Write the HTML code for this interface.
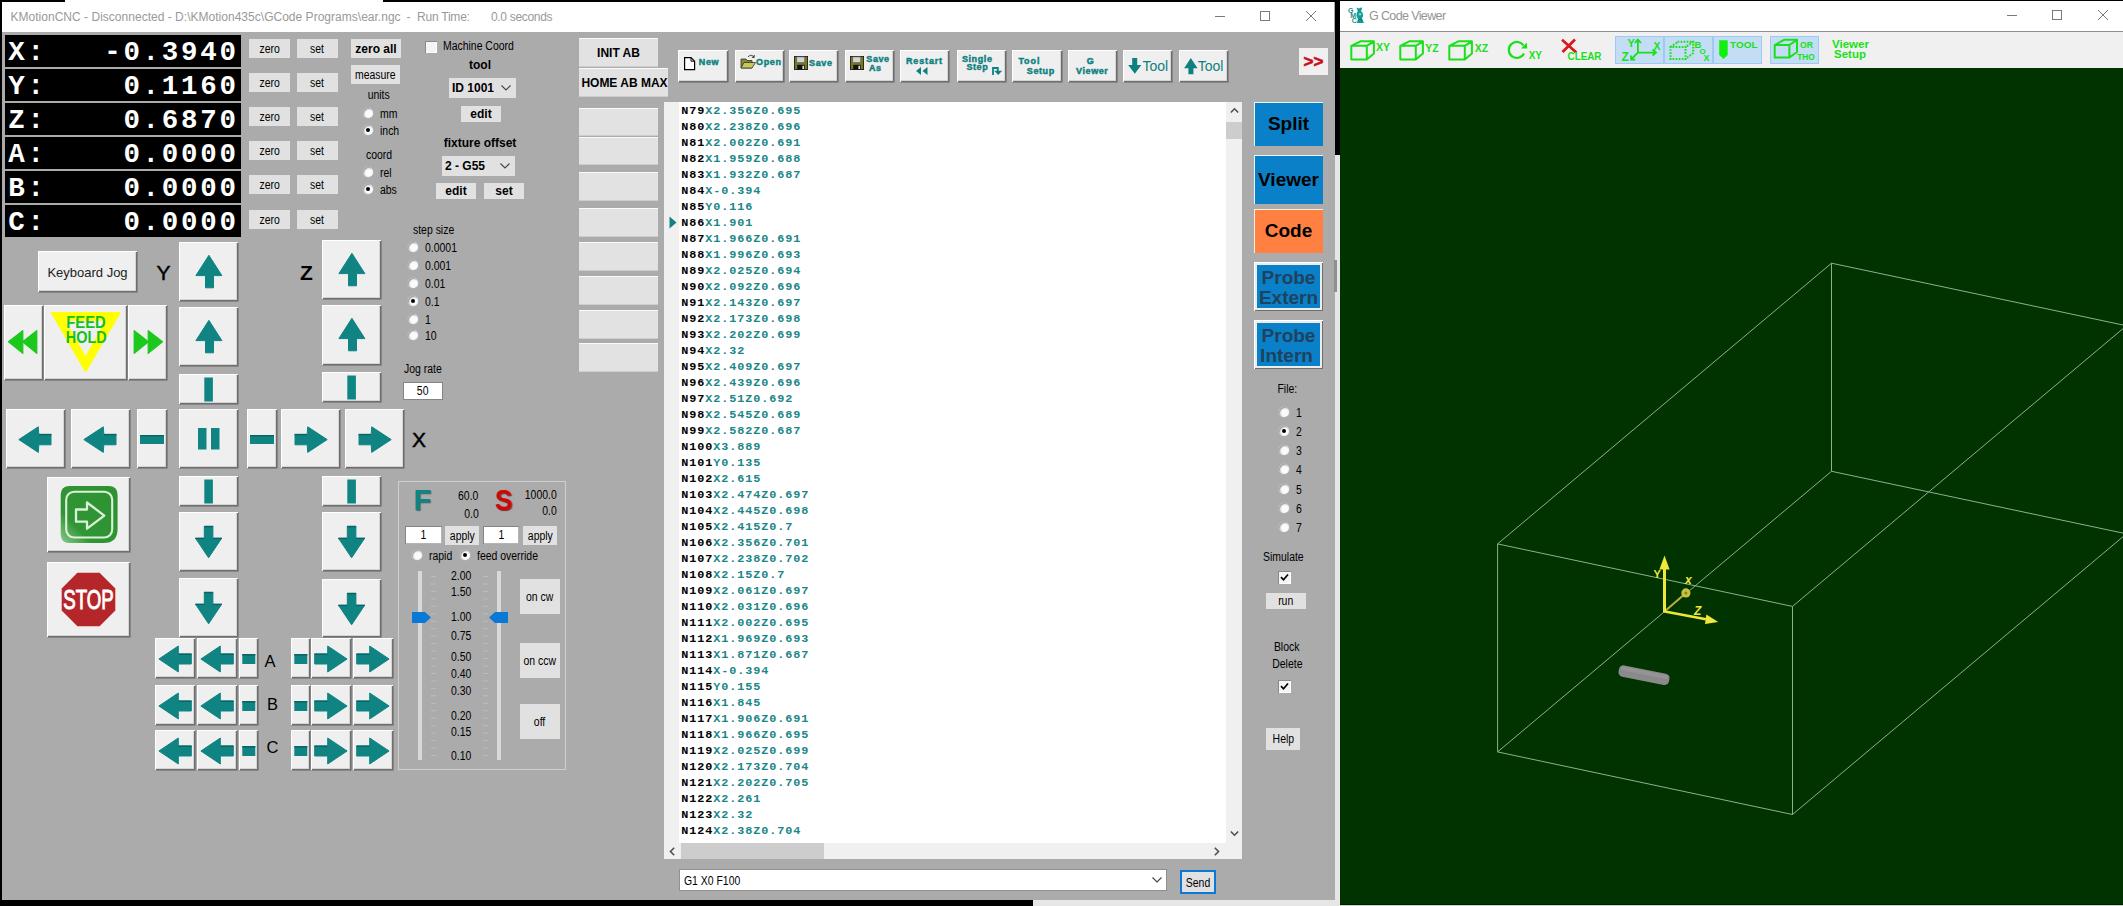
<!DOCTYPE html><html><head><meta charset="utf-8"><title>KMotionCNC</title><style>
html,body{margin:0;padding:0}
body{width:2123px;height:906px;overflow:hidden;position:relative;background:#ababab;font-family:"Liberation Sans",sans-serif;font-size:12px;color:#000}
.a{position:absolute;box-sizing:border-box}
.t{white-space:nowrap;line-height:14px}
.c{text-align:center}
.n{display:inline-block;transform:scaleX(.87);transform-origin:0 50%}
.c .n,.fb .n{transform-origin:50% 50%}
.r .n{transform-origin:100% 50%}
.fb{background:#e1e1e1;text-align:center;white-space:nowrap}
.jb{background:#efefef;box-shadow:inset 1px 1px 0 #fff,inset -1px -1px 0 #6e6e6e,inset -2px -2px 0 #d4d4d4,0.6px 0.6px 0 0 #6e6e6e}
.jb svg{position:absolute;left:0;top:0}
.b{font-weight:bold}
.dro{background:#000;color:#fff;font-family:"Liberation Mono",monospace;font-weight:bold;font-size:27.5px;letter-spacing:2.7px;line-height:36.6px;white-space:pre}
.rad{border-radius:50%;background:#fbfbfb;box-shadow:inset 1px 1px 1.5px rgba(0,0,0,.42),0 0 1px #fff}
.rad.on::after{content:"";position:absolute;left:3.1px;top:3.1px;width:4px;height:4px;border-radius:50%;background:#000}
.chk{width:13px;height:13px;background:#f4f4f4;box-shadow:inset 1px 1px 0 #8a8a8a,inset -1px -1px 0 #fff}
.code{font-family:"Liberation Mono",monospace;font-size:11.8px;letter-spacing:0.92px;font-weight:bold;line-height:16px;white-space:pre;color:#1b8686}
.code b{color:#000}
.tb{color:#0e8080;font-weight:bold;font-size:9px;line-height:10px;letter-spacing:0.6px;-webkit-text-stroke:0.45px #0e8080}
.big{font-weight:bold;font-size:19px;text-align:center;white-space:nowrap}
.vt{fill:#19e019;font-family:"Liberation Sans",sans-serif;font-weight:bold}
</style></head><body>
<div class="a " style="left:0px;top:0px;width:2123px;height:2px;background:#000"></div>
<div class="a " style="left:65px;top:0px;width:318px;height:2px;background:#fff"></div>
<div class="a " style="left:1340px;top:1px;width:783px;height:1px;background:#fff"></div>
<div class="a " style="left:0px;top:0px;width:2px;height:906px;background:#000"></div>
<div class="a " style="left:2px;top:2px;width:1332px;height:30px;background:#fff"></div>
<div class="a " style="left:1334.6px;top:0px;width:5.4px;height:155.4px;background:#000"></div>
<div class="a " style="left:1334.8px;top:155.4px;width:5.2px;height:750.6px;background:#e6e6e6"></div>
<div class="a " style="left:1334px;top:260px;width:3px;height:32px;background:#8f8f8f"></div>
<div class="a " style="left:0px;top:900px;width:1033px;height:6px;background:#000"></div>
<div class="a " style="left:1033px;top:900px;width:307px;height:6px;background:#e6e6e6"></div>
<div class="a t " style="left:10.5px;top:10px;color:#999;font-size:12px;line-height:14px;letter-spacing:0.02px;">KMotionCNC - Disconnected - D:\KMotion435c\GCode Programs\ear.ngc</div>
<div class="a t " style="left:406.5px;top:10px;color:#999;font-size:12px;line-height:14px;">-</div>
<div class="a t " style="left:417px;top:10px;color:#999;font-size:12px;line-height:14px;letter-spacing:-0.22px">Run Time:</div>
<div class="a t " style="left:491px;top:10px;color:#999;font-size:12px;line-height:14px;letter-spacing:-0.32px">0.0 seconds</div>
<div class="a " style="left:1215px;top:16px;width:10px;height:1px;background:#7a7a7a"></div>
<div class="a " style="left:1260px;top:11px;width:10px;height:10px;border:1px solid #7a7a7a"></div>
<svg class="a" style="left:1305px;top:10px" width="12" height="12" viewBox="0 0 12 12"><path d="M1 1L11 11M11 1L1 11" stroke="#7a7a7a" stroke-width="1" fill="none"/></svg>
<div class="a dro" style="left:5px;top:35px;width:236px;height:32px;padding-left:3.2px;overflow:hidden">X:   -0.3940</div>
<div class="a fb t" style="left:249px;top:39px;width:41px;height:19px;line-height:20px"><span class="n">zero</span></div>
<div class="a fb t" style="left:297px;top:39px;width:41px;height:19px;line-height:20px"><span class="n">set</span></div>
<div class="a dro" style="left:5px;top:69px;width:236px;height:32px;padding-left:3.2px;overflow:hidden">Y:    0.1160</div>
<div class="a fb t" style="left:249px;top:73px;width:41px;height:19px;line-height:20px"><span class="n">zero</span></div>
<div class="a fb t" style="left:297px;top:73px;width:41px;height:19px;line-height:20px"><span class="n">set</span></div>
<div class="a dro" style="left:5px;top:103px;width:236px;height:32px;padding-left:3.2px;overflow:hidden">Z:    0.6870</div>
<div class="a fb t" style="left:249px;top:107px;width:41px;height:19px;line-height:20px"><span class="n">zero</span></div>
<div class="a fb t" style="left:297px;top:107px;width:41px;height:19px;line-height:20px"><span class="n">set</span></div>
<div class="a dro" style="left:5px;top:137px;width:236px;height:32px;padding-left:3.2px;overflow:hidden">A:    0.0000</div>
<div class="a fb t" style="left:249px;top:141px;width:41px;height:19px;line-height:20px"><span class="n">zero</span></div>
<div class="a fb t" style="left:297px;top:141px;width:41px;height:19px;line-height:20px"><span class="n">set</span></div>
<div class="a dro" style="left:5px;top:171px;width:236px;height:32px;padding-left:3.2px;overflow:hidden">B:    0.0000</div>
<div class="a fb t" style="left:249px;top:175px;width:41px;height:19px;line-height:20px"><span class="n">zero</span></div>
<div class="a fb t" style="left:297px;top:175px;width:41px;height:19px;line-height:20px"><span class="n">set</span></div>
<div class="a dro" style="left:5px;top:205px;width:236px;height:32px;padding-left:3.2px;overflow:hidden">C:    0.0000</div>
<div class="a fb t" style="left:249px;top:210px;width:41px;height:19px;line-height:20px"><span class="n">zero</span></div>
<div class="a fb t" style="left:297px;top:210px;width:41px;height:19px;line-height:20px"><span class="n">set</span></div>
<div class="a fb t b" style="left:351px;top:39px;width:50px;height:19px;line-height:21px">zero all</div>
<div class="a fb t" style="left:351px;top:65px;width:49px;height:19px;line-height:20px"><span class="n">measure</span></div>
<div class="a t c" style="left:351px;top:88px;width:55px;height:14px;"><span class="n">units</span></div>
<div class="a rad" style="left:362.9px;top:107.7px;width:10.2px;height:10.2px;"></div>
<div class="a t " style="left:379.5px;top:106.5px;"><span class="n">mm</span></div>
<div class="a rad on" style="left:362.9px;top:124.7px;width:10.2px;height:10.2px;"></div>
<div class="a t " style="left:379.5px;top:123.5px;"><span class="n">inch</span></div>
<div class="a t c" style="left:351px;top:148px;width:57px;height:14px;"><span class="n">coord</span></div>
<div class="a rad" style="left:362.9px;top:166.7px;width:10.2px;height:10.2px;"></div>
<div class="a t " style="left:379.5px;top:165.5px;"><span class="n">rel</span></div>
<div class="a rad on" style="left:362.9px;top:183.7px;width:10.2px;height:10.2px;"></div>
<div class="a t " style="left:379.5px;top:182.5px;"><span class="n">abs</span></div>
<div class="a chk" style="left:424.7px;top:40.5px;width:12.3px;height:12.3px;"></div>
<div class="a t " style="left:442.5px;top:39px;"><span class="n">Machine Coord</span></div>
<div class="a t c b" style="left:440px;top:58px;width:80px;height:14px;">tool</div>
<div class="a t b" style="left:449px;top:78px;width:67px;height:20px;background:#e1e1e1;line-height:21.5px;padding-left:3px">ID 1001<svg class="a" style="right:5px;top:7.0px" width="10" height="6" viewBox="0 0 10 6"><path d="M0.5 0.5L5 5L9.5 0.5" stroke="#444" stroke-width="1.1" fill="none"/></svg></div>
<div class="a fb t b" style="left:461px;top:106px;width:40px;height:16px;line-height:17px">edit</div>
<div class="a t c b" style="left:430px;top:136px;width:100px;height:14px;">fixture offset</div>
<div class="a t b" style="left:442px;top:156px;width:73px;height:20px;background:#e1e1e1;line-height:21.5px;padding-left:3px">2 - G55<svg class="a" style="right:5px;top:7.0px" width="10" height="6" viewBox="0 0 10 6"><path d="M0.5 0.5L5 5L9.5 0.5" stroke="#444" stroke-width="1.1" fill="none"/></svg></div>
<div class="a fb t b" style="left:436px;top:183px;width:40px;height:16px;line-height:17px">edit</div>
<div class="a fb t b" style="left:484px;top:183px;width:40px;height:16px;line-height:17px">set</div>
<div class="a fb t b" style="left:579px;top:38px;width:79px;height:29px;line-height:30px;background:#e2e2e2;box-shadow:inset 0 1px 0 #fafafa,inset 0 -1px 0 #cdcdcd">INIT AB</div>
<div class="a fb t b" style="left:579px;top:68px;width:89px;height:29px;line-height:30px;padding-left:2px;background:#e2e2e2;box-shadow:inset 0 1px 0 #fafafa,inset 0 -1px 0 #cdcdcd">HOME AB MAX</div>
<div class="a " style="left:579px;top:108px;width:79px;height:28px;background:#e2e2e2;box-shadow:inset 0 1px 0 #fafafa,inset 0 -1px 0 #cdcdcd"></div>
<div class="a " style="left:579px;top:137px;width:79px;height:28px;background:#e2e2e2;box-shadow:inset 0 1px 0 #fafafa,inset 0 -1px 0 #cdcdcd"></div>
<div class="a " style="left:579px;top:172px;width:79px;height:29px;background:#e2e2e2;box-shadow:inset 0 1px 0 #fafafa,inset 0 -1px 0 #cdcdcd"></div>
<div class="a " style="left:579px;top:208px;width:79px;height:29px;background:#e2e2e2;box-shadow:inset 0 1px 0 #fafafa,inset 0 -1px 0 #cdcdcd"></div>
<div class="a " style="left:579px;top:242px;width:79px;height:29px;background:#e2e2e2;box-shadow:inset 0 1px 0 #fafafa,inset 0 -1px 0 #cdcdcd"></div>
<div class="a " style="left:579px;top:276px;width:79px;height:29px;background:#e2e2e2;box-shadow:inset 0 1px 0 #fafafa,inset 0 -1px 0 #cdcdcd"></div>
<div class="a " style="left:579px;top:310px;width:79px;height:29px;background:#e2e2e2;box-shadow:inset 0 1px 0 #fafafa,inset 0 -1px 0 #cdcdcd"></div>
<div class="a " style="left:579px;top:343px;width:79px;height:29px;background:#e2e2e2;box-shadow:inset 0 1px 0 #fafafa,inset 0 -1px 0 #cdcdcd"></div>
<div class="a t " style="left:412.5px;top:223px;"><span class="n">step size</span></div>
<div class="a rad" style="left:407.9px;top:241.7px;width:10.2px;height:10.2px;"></div>
<div class="a t " style="left:424.5px;top:240.5px;"><span class="n">0.0001</span></div>
<div class="a rad" style="left:407.9px;top:259.7px;width:10.2px;height:10.2px;"></div>
<div class="a t " style="left:424.5px;top:258.5px;"><span class="n">0.001</span></div>
<div class="a rad" style="left:407.9px;top:277.7px;width:10.2px;height:10.2px;"></div>
<div class="a t " style="left:424.5px;top:276.5px;"><span class="n">0.01</span></div>
<div class="a rad on" style="left:407.9px;top:295.7px;width:10.2px;height:10.2px;"></div>
<div class="a t " style="left:424.5px;top:294.5px;"><span class="n">0.1</span></div>
<div class="a rad" style="left:407.9px;top:313.7px;width:10.2px;height:10.2px;"></div>
<div class="a t " style="left:424.5px;top:312.5px;"><span class="n">1</span></div>
<div class="a rad" style="left:407.9px;top:330.2px;width:10.2px;height:10.2px;"></div>
<div class="a t " style="left:424.5px;top:329px;"><span class="n">10</span></div>
<div class="a t " style="left:404px;top:362px;"><span class="n">Jog rate</span></div>
<div class="a t c" style="left:403px;top:382px;width:40px;height:18px;background:#fff;line-height:19px;box-shadow:inset 0 0 0 1px #858585"><span class="n">50</span></div>
<div class="a jb" style="left:179px;top:242px;width:59px;height:59px;"><svg width="59" height="59" viewBox="0 0 59 59"><polygon points="29.9,13.3 42.9,33.6 34.5,33.6 34.5,45.8 26.5,45.8 26.5,33.6 16.9,33.6" fill="#108383" stroke="#108383" stroke-width="1" stroke-linejoin="round"/></svg></div>
<div class="a jb" style="left:179px;top:307px;width:59px;height:59px;"><svg width="59" height="59" viewBox="0 0 59 59"><polygon points="29.9,13.3 42.9,33.6 34.5,33.6 34.5,45.8 26.5,45.8 26.5,33.6 16.9,33.6" fill="#108383" stroke="#108383" stroke-width="1" stroke-linejoin="round"/></svg></div>
<div class="a jb" style="left:322px;top:240px;width:59px;height:59px;"><svg width="59" height="59" viewBox="0 0 59 59"><polygon points="29.9,13.3 42.9,33.6 34.5,33.6 34.5,45.8 26.5,45.8 26.5,33.6 16.9,33.6" fill="#108383" stroke="#108383" stroke-width="1" stroke-linejoin="round"/></svg></div>
<div class="a jb" style="left:322px;top:305px;width:59px;height:60px;"><svg width="59" height="60" viewBox="0 0 59 60"><polygon points="29.9,13.3 42.9,33.6 34.5,33.6 34.5,45.8 26.5,45.8 26.5,33.6 16.9,33.6" fill="#108383" stroke="#108383" stroke-width="1" stroke-linejoin="round"/></svg></div>
<div class="a jb" style="left:179px;top:374px;width:59px;height:30px;"><svg width="59" height="30" viewBox="0 0 59 30"><rect x="25.3" y="3.5" width="8.6" height="24" fill="#108383"/></svg></div>
<div class="a jb" style="left:322px;top:372px;width:59px;height:30px;"><svg width="59" height="30" viewBox="0 0 59 30"><rect x="25.3" y="3.5" width="8.6" height="24" fill="#108383"/></svg></div>
<div class="a jb" style="left:179px;top:476px;width:59px;height:30px;"><svg width="59" height="30" viewBox="0 0 59 30"><rect x="25.3" y="3.5" width="8.6" height="24" fill="#108383"/></svg></div>
<div class="a jb" style="left:322px;top:476px;width:59px;height:30px;"><svg width="59" height="30" viewBox="0 0 59 30"><rect x="25.3" y="3.5" width="8.6" height="24" fill="#108383"/></svg></div>
<div class="a jb" style="left:179px;top:512px;width:59px;height:59px;"><svg width="59" height="59" viewBox="0 0 59 59"><polygon points="29.6,45.8 42.7,26.2 33.9,26.2 33.9,14.3 25.3,14.3 25.3,26.2 16.5,26.2" fill="#108383" stroke="#108383" stroke-width="1" stroke-linejoin="round"/><rect x="25.1" y="13.9" width="9" height="1.4" fill="#0b6464"/><rect x="16.3" y="25.8" width="9" height="1.3" fill="#0b6464"/><rect x="33.9" y="25.8" width="9" height="1.3" fill="#0b6464"/></svg></div>
<div class="a jb" style="left:322px;top:512px;width:59px;height:59px;"><svg width="59" height="59" viewBox="0 0 59 59"><polygon points="29.6,45.8 42.7,26.2 33.9,26.2 33.9,14.3 25.3,14.3 25.3,26.2 16.5,26.2" fill="#108383" stroke="#108383" stroke-width="1" stroke-linejoin="round"/><rect x="25.1" y="13.9" width="9" height="1.4" fill="#0b6464"/><rect x="16.3" y="25.8" width="9" height="1.3" fill="#0b6464"/><rect x="33.9" y="25.8" width="9" height="1.3" fill="#0b6464"/></svg></div>
<div class="a jb" style="left:179px;top:578px;width:59px;height:59px;"><svg width="59" height="59" viewBox="0 0 59 59"><polygon points="29.6,45.8 42.7,26.2 33.9,26.2 33.9,14.3 25.3,14.3 25.3,26.2 16.5,26.2" fill="#108383" stroke="#108383" stroke-width="1" stroke-linejoin="round"/><rect x="25.1" y="13.9" width="9" height="1.4" fill="#0b6464"/><rect x="16.3" y="25.8" width="9" height="1.3" fill="#0b6464"/><rect x="33.9" y="25.8" width="9" height="1.3" fill="#0b6464"/></svg></div>
<div class="a jb" style="left:322px;top:579px;width:59px;height:58px;"><svg width="59" height="58" viewBox="0 0 59 58"><polygon points="29.6,45.8 42.7,26.2 33.9,26.2 33.9,14.3 25.3,14.3 25.3,26.2 16.5,26.2" fill="#108383" stroke="#108383" stroke-width="1" stroke-linejoin="round"/><rect x="25.1" y="13.9" width="9" height="1.4" fill="#0b6464"/><rect x="16.3" y="25.8" width="9" height="1.3" fill="#0b6464"/><rect x="33.9" y="25.8" width="9" height="1.3" fill="#0b6464"/></svg></div>
<div class="a jb" style="left:6px;top:409px;width:59px;height:59px;"><svg width="59" height="59" viewBox="0 0 59 59"><polygon points="12.8,30.6 32.3,17.8 32.8,25.4 45.0,25.4 45.0,35.8 32.8,35.8 32.3,43.4" fill="#108383" stroke="#108383" stroke-width="1" stroke-linejoin="round"/><rect x="33" y="24.9" width="12.5" height="1.4" fill="#0b6464"/></svg></div>
<div class="a jb" style="left:71px;top:409px;width:59px;height:59px;"><svg width="59" height="59" viewBox="0 0 59 59"><polygon points="12.8,30.6 32.3,17.8 32.8,25.4 45.0,25.4 45.0,35.8 32.8,35.8 32.3,43.4" fill="#108383" stroke="#108383" stroke-width="1" stroke-linejoin="round"/><rect x="33" y="24.9" width="12.5" height="1.4" fill="#0b6464"/></svg></div>
<div class="a jb" style="left:137px;top:409px;width:30px;height:59px;"><svg width="30" height="59" viewBox="0 0 30 59"><rect x="3" y="26" width="24" height="9" fill="#108383"/><rect x="3" y="26" width="24" height="1.4" fill="#0b6464"/></svg></div>
<div class="a jb" style="left:179px;top:409px;width:59px;height:59px;"><svg width="59" height="59" viewBox="0 0 59 59"><rect x="19" y="19" width="8.5" height="21.5" fill="#108383"/><rect x="32" y="19" width="8.5" height="21.5" fill="#108383"/></svg></div>
<div class="a jb" style="left:247px;top:409px;width:30px;height:59px;"><svg width="30" height="59" viewBox="0 0 30 59"><rect x="3" y="26" width="24" height="9" fill="#108383"/><rect x="3" y="26" width="24" height="1.4" fill="#0b6464"/></svg></div>
<div class="a jb" style="left:281px;top:409px;width:59px;height:59px;"><svg width="59" height="59" viewBox="0 0 59 59"><polygon points="46.2,30.6 26.7,17.8 26.2,25.4 14.0,25.4 14.0,35.8 26.2,35.8 26.7,43.4" fill="#108383" stroke="#108383" stroke-width="1" stroke-linejoin="round"/><rect x="13.5" y="24.9" width="12.5" height="1.4" fill="#0b6464"/></svg></div>
<div class="a jb" style="left:345px;top:409px;width:59px;height:59px;"><svg width="59" height="59" viewBox="0 0 59 59"><polygon points="46.2,30.6 26.7,17.8 26.2,25.4 14.0,25.4 14.0,35.8 26.2,35.8 26.7,43.4" fill="#108383" stroke="#108383" stroke-width="1" stroke-linejoin="round"/><rect x="13.5" y="24.9" width="12.5" height="1.4" fill="#0b6464"/></svg></div>
<div class="a t " style="left:412px;top:428px;font-size:21px;line-height:24px;-webkit-text-stroke:0.45px #000">X</div>
<div class="a t " style="left:156.6px;top:261.3px;font-size:21px;line-height:24px;-webkit-text-stroke:0.45px #000">Y</div>
<div class="a t b" style="left:300px;top:261px;font-size:21px;line-height:24px">Z</div>
<div class="a jb" style="left:155px;top:638px;width:40px;height:40px;"><svg width="40" height="40" viewBox="0 0 40 40"><polygon points="3.9,21.0 23.3,8.0 23.3,16.0 36.3,16.0 36.3,26.0 23.3,26.0 23.3,34.0" fill="#108383" stroke="#108383" stroke-width="1" stroke-linejoin="round"/><rect x="23.5" y="15.5" width="13.2" height="1.4" fill="#0b6464"/></svg></div>
<div class="a jb" style="left:197px;top:638px;width:40px;height:40px;"><svg width="40" height="40" viewBox="0 0 40 40"><polygon points="3.9,21.0 23.3,8.0 23.3,16.0 36.3,16.0 36.3,26.0 23.3,26.0 23.3,34.0" fill="#108383" stroke="#108383" stroke-width="1" stroke-linejoin="round"/><rect x="23.5" y="15.5" width="13.2" height="1.4" fill="#0b6464"/></svg></div>
<div class="a jb" style="left:239px;top:638px;width:19px;height:40px;"><svg width="19" height="40" viewBox="0 0 19 40"><rect x="3.3" y="16" width="13" height="10" fill="#108383"/><rect x="3.3" y="16" width="13" height="1.6" fill="#0b6464"/></svg></div>
<div class="a jb" style="left:291px;top:638px;width:19px;height:40px;"><svg width="19" height="40" viewBox="0 0 19 40"><rect x="3.3" y="16" width="13" height="10" fill="#108383"/><rect x="3.3" y="16" width="13" height="1.6" fill="#0b6464"/></svg></div>
<div class="a jb" style="left:311px;top:638px;width:40px;height:40px;"><svg width="40" height="40" viewBox="0 0 40 40"><polygon points="36.1,21.0 16.7,8.0 16.7,16.0 3.7,16.0 3.7,26.0 16.7,26.0 16.7,34.0" fill="#108383" stroke="#108383" stroke-width="1" stroke-linejoin="round"/><rect x="3.3" y="15.5" width="13.2" height="1.4" fill="#0b6464"/></svg></div>
<div class="a jb" style="left:353px;top:638px;width:40px;height:40px;"><svg width="40" height="40" viewBox="0 0 40 40"><polygon points="36.1,21.0 16.7,8.0 16.7,16.0 3.7,16.0 3.7,26.0 16.7,26.0 16.7,34.0" fill="#108383" stroke="#108383" stroke-width="1" stroke-linejoin="round"/><rect x="3.3" y="15.5" width="13.2" height="1.4" fill="#0b6464"/></svg></div>
<div class="a t " style="left:264.6px;top:651px;font-size:16.5px;line-height:20px">A</div>
<div class="a jb" style="left:155px;top:685px;width:40px;height:40px;"><svg width="40" height="40" viewBox="0 0 40 40"><polygon points="3.9,21.0 23.3,8.0 23.3,16.0 36.3,16.0 36.3,26.0 23.3,26.0 23.3,34.0" fill="#108383" stroke="#108383" stroke-width="1" stroke-linejoin="round"/><rect x="23.5" y="15.5" width="13.2" height="1.4" fill="#0b6464"/></svg></div>
<div class="a jb" style="left:197px;top:685px;width:40px;height:40px;"><svg width="40" height="40" viewBox="0 0 40 40"><polygon points="3.9,21.0 23.3,8.0 23.3,16.0 36.3,16.0 36.3,26.0 23.3,26.0 23.3,34.0" fill="#108383" stroke="#108383" stroke-width="1" stroke-linejoin="round"/><rect x="23.5" y="15.5" width="13.2" height="1.4" fill="#0b6464"/></svg></div>
<div class="a jb" style="left:239px;top:685px;width:19px;height:40px;"><svg width="19" height="40" viewBox="0 0 19 40"><rect x="3.3" y="16" width="13" height="10" fill="#108383"/><rect x="3.3" y="16" width="13" height="1.6" fill="#0b6464"/></svg></div>
<div class="a jb" style="left:291px;top:685px;width:19px;height:40px;"><svg width="19" height="40" viewBox="0 0 19 40"><rect x="3.3" y="16" width="13" height="10" fill="#108383"/><rect x="3.3" y="16" width="13" height="1.6" fill="#0b6464"/></svg></div>
<div class="a jb" style="left:311px;top:685px;width:40px;height:40px;"><svg width="40" height="40" viewBox="0 0 40 40"><polygon points="36.1,21.0 16.7,8.0 16.7,16.0 3.7,16.0 3.7,26.0 16.7,26.0 16.7,34.0" fill="#108383" stroke="#108383" stroke-width="1" stroke-linejoin="round"/><rect x="3.3" y="15.5" width="13.2" height="1.4" fill="#0b6464"/></svg></div>
<div class="a jb" style="left:353px;top:685px;width:40px;height:40px;"><svg width="40" height="40" viewBox="0 0 40 40"><polygon points="36.1,21.0 16.7,8.0 16.7,16.0 3.7,16.0 3.7,26.0 16.7,26.0 16.7,34.0" fill="#108383" stroke="#108383" stroke-width="1" stroke-linejoin="round"/><rect x="3.3" y="15.5" width="13.2" height="1.4" fill="#0b6464"/></svg></div>
<div class="a t " style="left:266.9px;top:694px;font-size:16.5px;line-height:20px">B</div>
<div class="a jb" style="left:155px;top:730px;width:40px;height:40px;"><svg width="40" height="40" viewBox="0 0 40 40"><polygon points="3.9,21.0 23.3,8.0 23.3,16.0 36.3,16.0 36.3,26.0 23.3,26.0 23.3,34.0" fill="#108383" stroke="#108383" stroke-width="1" stroke-linejoin="round"/><rect x="23.5" y="15.5" width="13.2" height="1.4" fill="#0b6464"/></svg></div>
<div class="a jb" style="left:197px;top:730px;width:40px;height:40px;"><svg width="40" height="40" viewBox="0 0 40 40"><polygon points="3.9,21.0 23.3,8.0 23.3,16.0 36.3,16.0 36.3,26.0 23.3,26.0 23.3,34.0" fill="#108383" stroke="#108383" stroke-width="1" stroke-linejoin="round"/><rect x="23.5" y="15.5" width="13.2" height="1.4" fill="#0b6464"/></svg></div>
<div class="a jb" style="left:239px;top:730px;width:19px;height:40px;"><svg width="19" height="40" viewBox="0 0 19 40"><rect x="3.3" y="16" width="13" height="10" fill="#108383"/><rect x="3.3" y="16" width="13" height="1.6" fill="#0b6464"/></svg></div>
<div class="a jb" style="left:291px;top:730px;width:19px;height:40px;"><svg width="19" height="40" viewBox="0 0 19 40"><rect x="3.3" y="16" width="13" height="10" fill="#108383"/><rect x="3.3" y="16" width="13" height="1.6" fill="#0b6464"/></svg></div>
<div class="a jb" style="left:311px;top:730px;width:40px;height:40px;"><svg width="40" height="40" viewBox="0 0 40 40"><polygon points="36.1,21.0 16.7,8.0 16.7,16.0 3.7,16.0 3.7,26.0 16.7,26.0 16.7,34.0" fill="#108383" stroke="#108383" stroke-width="1" stroke-linejoin="round"/><rect x="3.3" y="15.5" width="13.2" height="1.4" fill="#0b6464"/></svg></div>
<div class="a jb" style="left:353px;top:730px;width:40px;height:40px;"><svg width="40" height="40" viewBox="0 0 40 40"><polygon points="36.1,21.0 16.7,8.0 16.7,16.0 3.7,16.0 3.7,26.0 16.7,26.0 16.7,34.0" fill="#108383" stroke="#108383" stroke-width="1" stroke-linejoin="round"/><rect x="3.3" y="15.5" width="13.2" height="1.4" fill="#0b6464"/></svg></div>
<div class="a t " style="left:266.4px;top:737.1px;font-size:16.5px;line-height:20px">C</div>
<div class="a jb t c" style="left:38px;top:251px;width:99px;height:41px;line-height:43px;font-size:13px;color:#222">Keyboard Jog</div>
<div class="a jb" style="left:4px;top:305px;width:39px;height:75px;"><svg width="39" height="75" viewBox="0 0 39 75"><polygon points="4.5,36.8 18.8,25.6 18.8,48.4" fill="#1cc81c" stroke="#1cc81c" stroke-width="1.2" stroke-linejoin="round"/><polygon points="18.6,36.8 32.8,25.6 32.8,48.4" fill="#1cc81c" stroke="#1cc81c" stroke-width="1.2" stroke-linejoin="round"/></svg></div>
<div class="a jb" style="left:44px;top:305px;width:83px;height:75px;"><svg width="83" height="75" viewBox="0 0 83 75"><polygon points="7.2,7.6 76.3,7.6 41.6,67.0" fill="#ffff00" stroke="#ffff00" stroke-width="1" stroke-linejoin="round"/><polygon points="21.6,15.8 61.5,15.8 41.5,50.8" fill="#efefef" /><text x="42" y="22.9" text-anchor="middle" font-family="Liberation Sans,sans-serif" font-weight="bold" font-size="15.6" fill="#14c01c" textLength="39.5" lengthAdjust="spacingAndGlyphs">FEED</text><text x="42.3" y="37.7" text-anchor="middle" font-family="Liberation Sans,sans-serif" font-weight="bold" font-size="15.6" fill="#14c01c" textLength="41" lengthAdjust="spacingAndGlyphs">HOLD</text></svg></div>
<div class="a jb" style="left:128px;top:305px;width:39px;height:75px;"><svg width="39" height="75" viewBox="0 0 39 75"><polygon points="34.5,36.8 20.2,25.6 20.2,48.4" fill="#1cc81c" stroke="#1cc81c" stroke-width="1.2" stroke-linejoin="round"/><polygon points="20.4,36.8 6.2,25.6 6.2,48.4" fill="#1cc81c" stroke="#1cc81c" stroke-width="1.2" stroke-linejoin="round"/></svg></div>
<div class="a jb" style="left:47px;top:477px;width:83px;height:75px;"><svg width="83" height="75" viewBox="0 0 83 75"><defs><linearGradient id="cg" x1="1" y1="0" x2="0" y2="1"><stop offset="0" stop-color="#2c9232"/><stop offset="0.72" stop-color="#2f9535"/><stop offset="1" stop-color="#8cc88c"/></linearGradient></defs>
<path d="M22.7 9H61.6Q70.6 9 70.6 18V52Q70.6 66 56.6 66H22.7Q13.7 66 13.7 57V18Q13.7 9 22.7 9Z" fill="url(#cg)"/>
<rect x="19.2" y="14.7" width="46" height="45.8" rx="8" fill="none" stroke="#dcf2d8" stroke-width="2.1"/>
<path d="M29 32.5H40V25.5L57.3 38.6L40 51.7V44.7H29Z" fill="none" stroke="#dcf2d8" stroke-width="2.3" stroke-linejoin="round"/></svg></div>
<div class="a jb" style="left:47px;top:562px;width:83px;height:75px;"><svg width="83" height="75" viewBox="0 0 83 75"><polygon points="68.3,48.6 52.6,64.3 30.4,64.3 14.7,48.6 14.7,26.4 30.4,10.7 52.6,10.7 68.3,26.4" fill="#b5262a" /><text x="41.5" y="47.3" text-anchor="middle" font-family="Liberation Sans,sans-serif" font-weight="normal" font-size="27.5" fill="#fff" stroke="#fff" stroke-width="1" textLength="50.5" lengthAdjust="spacingAndGlyphs">STOP</text></svg></div>
<div class="a " style="left:398px;top:481px;width:168px;height:289px;border:1px solid #cfcfcf"></div>
<div class="a t b" style="left:413.5px;top:484px;font-size:29px;line-height:32px;color:#108383;text-shadow:1px 1px 1px #4a6a6a">F</div>
<div class="a t b" style="left:495px;top:484px;font-size:29px;line-height:32px;color:#cc0808;text-shadow:1px 1px 1px #7a3030;transform:scaleX(.9);transform-origin:0 0">S</div>
<div class="a t r" style="right:1644.5px;top:488.5px"><span class="n">60.0</span></div>
<div class="a t r" style="right:1644.5px;top:506.5px"><span class="n">0.0</span></div>
<div class="a t r" style="right:1566.5px;top:487.5px"><span class="n">1000.0</span></div>
<div class="a t r" style="right:1566.5px;top:503.5px"><span class="n">0.0</span></div>
<div class="a t c" style="left:405px;top:526px;width:37px;height:18px;background:#fff;line-height:19px;box-shadow:inset 1px 1px 0 #858585,inset -1px -1px 0 #b4b4b4"><span class="n">1</span></div>
<div class="a fb t" style="left:445px;top:526px;width:34px;height:19px;line-height:20px"><span class="n">apply</span></div>
<div class="a t c" style="left:483px;top:526px;width:36px;height:18px;background:#fff;line-height:19px;box-shadow:inset 1px 1px 0 #858585,inset -1px -1px 0 #b4b4b4"><span class="n">1</span></div>
<div class="a fb t" style="left:523px;top:526px;width:34px;height:19px;line-height:20px"><span class="n">apply</span></div>
<div class="a rad" style="left:411.9px;top:549.7px;width:10.2px;height:10.2px;"></div>
<div class="a t " style="left:428.5px;top:548.5px;"><span class="n">rapid</span></div>
<div class="a rad on" style="left:459.9px;top:549.7px;width:10.2px;height:10.2px;"></div>
<div class="a t " style="left:476.5px;top:548.5px;"><span class="n">feed override</span></div>
<div class="a " style="left:418px;top:571px;width:4px;height:189px;background:#d9d9d9"></div>
<div class="a " style="left:497px;top:571px;width:4px;height:189px;background:#d9d9d9"></div>
<div class="a t " style="left:451px;top:569.3px;"><span class="n">2.00</span></div>
<div class="a t " style="left:451px;top:585.1px;"><span class="n">1.50</span></div>
<div class="a t " style="left:451px;top:609.8px;"><span class="n">1.00</span></div>
<div class="a t " style="left:451px;top:629.3px;"><span class="n">0.75</span></div>
<div class="a t " style="left:451px;top:650.1px;"><span class="n">0.50</span></div>
<div class="a t " style="left:451px;top:666.9px;"><span class="n">0.40</span></div>
<div class="a t " style="left:451px;top:683.9px;"><span class="n">0.30</span></div>
<div class="a t " style="left:451px;top:708.9px;"><span class="n">0.20</span></div>
<div class="a t " style="left:451px;top:724.9px;"><span class="n">0.15</span></div>
<div class="a t " style="left:451px;top:748.5px;"><span class="n">0.10</span></div>
<svg class="a" style="left:431px;top:571px" width="60" height="190" viewBox="0 0 60 190"><rect x="0" y="5.0" width="5" height="1" fill="#bcbcbc"/><rect x="52" y="5.0" width="5" height="1" fill="#bcbcbc"/><rect x="0" y="12.5" width="5" height="1" fill="#bcbcbc"/><rect x="52" y="12.5" width="5" height="1" fill="#bcbcbc"/><rect x="0" y="19.9" width="5" height="1" fill="#bcbcbc"/><rect x="52" y="19.9" width="5" height="1" fill="#bcbcbc"/><rect x="0" y="27.4" width="5" height="1" fill="#bcbcbc"/><rect x="52" y="27.4" width="5" height="1" fill="#bcbcbc"/><rect x="0" y="34.8" width="5" height="1" fill="#bcbcbc"/><rect x="52" y="34.8" width="5" height="1" fill="#bcbcbc"/><rect x="0" y="42.3" width="5" height="1" fill="#bcbcbc"/><rect x="52" y="42.3" width="5" height="1" fill="#bcbcbc"/><rect x="0" y="49.8" width="5" height="1" fill="#bcbcbc"/><rect x="52" y="49.8" width="5" height="1" fill="#bcbcbc"/><rect x="0" y="57.2" width="5" height="1" fill="#bcbcbc"/><rect x="52" y="57.2" width="5" height="1" fill="#bcbcbc"/><rect x="0" y="64.7" width="5" height="1" fill="#bcbcbc"/><rect x="52" y="64.7" width="5" height="1" fill="#bcbcbc"/><rect x="0" y="72.1" width="5" height="1" fill="#bcbcbc"/><rect x="52" y="72.1" width="5" height="1" fill="#bcbcbc"/><rect x="0" y="79.6" width="5" height="1" fill="#bcbcbc"/><rect x="52" y="79.6" width="5" height="1" fill="#bcbcbc"/><rect x="0" y="87.0" width="5" height="1" fill="#bcbcbc"/><rect x="52" y="87.0" width="5" height="1" fill="#bcbcbc"/><rect x="0" y="94.5" width="5" height="1" fill="#bcbcbc"/><rect x="52" y="94.5" width="5" height="1" fill="#bcbcbc"/><rect x="0" y="102.0" width="5" height="1" fill="#bcbcbc"/><rect x="52" y="102.0" width="5" height="1" fill="#bcbcbc"/><rect x="0" y="109.4" width="5" height="1" fill="#bcbcbc"/><rect x="52" y="109.4" width="5" height="1" fill="#bcbcbc"/><rect x="0" y="116.9" width="5" height="1" fill="#bcbcbc"/><rect x="52" y="116.9" width="5" height="1" fill="#bcbcbc"/><rect x="0" y="124.3" width="5" height="1" fill="#bcbcbc"/><rect x="52" y="124.3" width="5" height="1" fill="#bcbcbc"/><rect x="0" y="131.8" width="5" height="1" fill="#bcbcbc"/><rect x="52" y="131.8" width="5" height="1" fill="#bcbcbc"/><rect x="0" y="139.2" width="5" height="1" fill="#bcbcbc"/><rect x="52" y="139.2" width="5" height="1" fill="#bcbcbc"/><rect x="0" y="146.7" width="5" height="1" fill="#bcbcbc"/><rect x="52" y="146.7" width="5" height="1" fill="#bcbcbc"/><rect x="0" y="154.2" width="5" height="1" fill="#bcbcbc"/><rect x="52" y="154.2" width="5" height="1" fill="#bcbcbc"/><rect x="0" y="161.6" width="5" height="1" fill="#bcbcbc"/><rect x="52" y="161.6" width="5" height="1" fill="#bcbcbc"/><rect x="0" y="169.1" width="5" height="1" fill="#bcbcbc"/><rect x="52" y="169.1" width="5" height="1" fill="#bcbcbc"/><rect x="0" y="176.5" width="5" height="1" fill="#bcbcbc"/><rect x="52" y="176.5" width="5" height="1" fill="#bcbcbc"/><rect x="0" y="184.0" width="5" height="1" fill="#bcbcbc"/><rect x="52" y="184.0" width="5" height="1" fill="#bcbcbc"/></svg>
<svg class="a" style="left:411px;top:611px" width="100" height="13" viewBox="0 0 100 13"><polygon points="1,1 14,1 20,6.5 14,12 1,12" fill="#0a78d7"/><polygon points="97,1 84,1 78,6.5 84,12 97,12" fill="#0a78d7"/></svg>
<div class="a fb t" style="left:520px;top:579px;width:40px;height:35px;line-height:36px"><span class="n">on cw</span></div>
<div class="a fb t" style="left:520px;top:643px;width:40px;height:35px;line-height:36px"><span class="n">on ccw</span></div>
<div class="a fb t" style="left:520px;top:704px;width:40px;height:35px;line-height:36px"><span class="n">off</span></div>
<div class="a jb" style="left:678px;top:50px;width:50px;height:32px;"><svg class="a" style="left:6px;top:7px" width="12" height="14" viewBox="0 0 12 14"><path d="M0.6 0.6H7L10.6 4.2V12.6H0.6Z" fill="#fff" stroke="#000" stroke-width="1.2"/><path d="M7 0.6V4.2H10.6" fill="none" stroke="#000" stroke-width="1"/></svg><div class="a t tb" style="left:20.8px;top:6.5px;">New</div></div>
<div class="a jb" style="left:735px;top:50px;width:49px;height:32px;"><svg class="a" style="left:5px;top:4px" width="17" height="16" viewBox="0 0 17 16"><path d="M1 5H6L7 6.5H12V14H1Z" fill="#8a8a2a" stroke="#333" stroke-width="0.8"/><path d="M1 14L4 8.5H15.5L12 14Z" fill="#c8c85a" stroke="#333" stroke-width="0.8"/><path d="M8 3C10 0.5 13 1 14 3.5M14 3.5L14.3 1M14 3.5L11.8 3.2" fill="none" stroke="#222" stroke-width="0.9"/></svg><div class="a t tb" style="left:21.1px;top:6.5px;">Open</div></div>
<div class="a jb" style="left:789px;top:50px;width:49px;height:32px;"><svg class="a" style="left:5px;top:6px" width="14" height="14" viewBox="0 0 15 15"><rect x="0.5" y="0.5" width="14" height="14" fill="#77771f" stroke="#222" stroke-width="1"/><rect x="3" y="1" width="8.5" height="6" fill="#d4d4d4" stroke="#555" stroke-width="0.6"/><rect x="3.5" y="9.5" width="8" height="5" fill="#111"/><rect x="9" y="10.5" width="1.8" height="3.5" fill="#ddd"/></svg><div class="a t tb" style="left:20.1px;top:7.6px;">Save</div></div>
<div class="a jb" style="left:845px;top:50px;width:49px;height:32px;"><svg class="a" style="left:5px;top:6px" width="14" height="14" viewBox="0 0 15 15"><rect x="0.5" y="0.5" width="14" height="14" fill="#77771f" stroke="#222" stroke-width="1"/><rect x="3" y="1" width="8.5" height="6" fill="#d4d4d4" stroke="#555" stroke-width="0.6"/><rect x="3.5" y="9.5" width="8" height="5" fill="#111"/><rect x="9" y="10.5" width="1.8" height="3.5" fill="#ddd"/></svg><div class="a t tb" style="left:21.3px;top:4.4px;">Save</div><div class="a t tb" style="left:24px;top:13.2px;">As</div></div>
<div class="a jb" style="left:900px;top:50px;width:49px;height:32px;"><div class="a t tb" style="left:6px;top:5.8px;letter-spacing:0.85px">Restart</div><svg class="a" style="left:16px;top:17.3px" width="12" height="8" viewBox="0 0 12 8"><polygon points="0,4 5,0 5,8" fill="#0e8080"/><polygon points="6.5,4 11.5,0 11.5,8" fill="#0e8080"/></svg></div>
<div class="a jb" style="left:957px;top:50px;width:49px;height:32px;"><div class="a t tb" style="left:4.9px;top:3.6px;">Single</div><div class="a t tb" style="left:9.4px;top:11.8px;">Step</div><svg class="a" style="left:35px;top:17px" width="11" height="8" viewBox="0 0 11 8"><path d="M1 8V1H5.8V4" fill="none" stroke="#0e8080" stroke-width="1.8"/><polygon points="2.2,3.8 10.2,3.8 6.2,8" fill="#0e8080"/></svg></div>
<div class="a jb" style="left:1012px;top:50px;width:50px;height:32px;"><div class="a t tb" style="left:6.4px;top:5.8px;letter-spacing:0.9px">Tool</div><div class="a t tb" style="left:14.8px;top:15.5px;">Setup</div></div>
<div class="a jb" style="left:1068px;top:50px;width:49px;height:32px;"><div class="a t tb" style="left:18.7px;top:6.3px;">G</div><div class="a t tb" style="left:8px;top:15.5px;">Viewer</div></div>
<div class="a jb" style="left:1123px;top:50px;width:49px;height:32px;"><svg class="a" style="left:5.3px;top:8px" width="14" height="16" viewBox="0 0 14 16"><polygon points="4.2,0 9.2,0 9.2,6.9 13.4,6.9 6.8,15.7 0.2,6.9 4.2,6.9" fill="#0e8080"/></svg><div class="a t" style="left:19.4px;top:8.1px;color:#0e8080;font-size:14px;line-height:16px">Tool</div></div>
<div class="a jb" style="left:1179px;top:50px;width:49px;height:32px;"><svg class="a" style="left:4.6px;top:7.5px" width="14" height="17" viewBox="0 0 14 17"><polygon points="4.4,16.2 9.4,16.2 9.4,10.3 13.5,10.3 6.8,0 0.1,10.3 4.4,10.3" fill="#0e8080"/></svg><div class="a t" style="left:18.8px;top:8.1px;color:#0e8080;font-size:14px;line-height:16px">Tool</div></div>
<div class="a t c b" style="left:1299px;top:48px;width:29px;height:27px;background:#f0f0f0;color:#c8101e;font-size:17px;line-height:28.5px;letter-spacing:0px;-webkit-text-stroke:0.6px #c8101e">&gt;&gt;</div>
<div class="a " style="left:664px;top:102px;width:578px;height:757px;background:#fff"></div>
<div class="a " style="left:664px;top:102px;width:15px;height:741px;background:#f0f0f0"></div>
<div class="a code" style="left:681.3px;top:103px"><b>N79</b>X2.356Z0.695
<b>N80</b>X2.238Z0.696
<b>N81</b>X2.002Z0.691
<b>N82</b>X1.959Z0.688
<b>N83</b>X1.932Z0.687
<b>N84</b>X-0.394
<b>N85</b>Y0.116
<b>N86</b>X1.901
<b>N87</b>X1.966Z0.691
<b>N88</b>X1.996Z0.693
<b>N89</b>X2.025Z0.694
<b>N90</b>X2.092Z0.696
<b>N91</b>X2.143Z0.697
<b>N92</b>X2.173Z0.698
<b>N93</b>X2.202Z0.699
<b>N94</b>X2.32
<b>N95</b>X2.409Z0.697
<b>N96</b>X2.439Z0.696
<b>N97</b>X2.51Z0.692
<b>N98</b>X2.545Z0.689
<b>N99</b>X2.582Z0.687
<b>N100</b>X3.889
<b>N101</b>Y0.135
<b>N102</b>X2.615
<b>N103</b>X2.474Z0.697
<b>N104</b>X2.445Z0.698
<b>N105</b>X2.415Z0.7
<b>N106</b>X2.356Z0.701
<b>N107</b>X2.238Z0.702
<b>N108</b>X2.15Z0.7
<b>N109</b>X2.061Z0.697
<b>N110</b>X2.031Z0.696
<b>N111</b>X2.002Z0.695
<b>N112</b>X1.969Z0.693
<b>N113</b>X1.871Z0.687
<b>N114</b>X-0.394
<b>N115</b>Y0.155
<b>N116</b>X1.845
<b>N117</b>X1.906Z0.691
<b>N118</b>X1.966Z0.695
<b>N119</b>X2.025Z0.699
<b>N120</b>X2.173Z0.704
<b>N121</b>X2.202Z0.705
<b>N122</b>X2.261
<b>N123</b>X2.32
<b>N124</b>X2.38Z0.704</div>
<svg class="a" style="left:669px;top:216px" width="8" height="13" viewBox="0 0 8 13"><polygon points="0.5,0.5 7.5,6.5 0.5,12.5" fill="#128080"/></svg>
<div class="a " style="left:1226px;top:102px;width:16px;height:741px;background:#f0f0f0"></div>
<div class="a " style="left:1226px;top:122px;width:16px;height:17px;background:#cdcdcd"></div>
<svg class="a" style="left:1229.5px;top:106px" width="9" height="9" viewBox="0 0 9 9"><path d="M0.8 6.5L4.5 2.8L8.2 6.5" stroke="#505050" stroke-width="1.6" fill="none"/></svg>
<svg class="a" style="left:1229.5px;top:829px" width="9" height="9" viewBox="0 0 9 9"><path d="M0.8 2.5L4.5 6.2L8.2 2.5" stroke="#505050" stroke-width="1.6" fill="none"/></svg>
<div class="a " style="left:664px;top:843px;width:578px;height:16px;background:#f0f0f0"></div>
<div class="a " style="left:681px;top:843px;width:143px;height:16px;background:#cdcdcd"></div>
<svg class="a" style="left:667.5px;top:846.5px" width="9" height="9" viewBox="0 0 9 9"><path d="M6.2 0.8L2.5 4.5L6.2 8.2" stroke="#505050" stroke-width="1.6" fill="none"/></svg>
<svg class="a" style="left:1212px;top:846.5px" width="9" height="9" viewBox="0 0 9 9"><path d="M2.8 0.8L6.5 4.5L2.8 8.2" stroke="#505050" stroke-width="1.6" fill="none"/></svg>
<div class="a t" style="left:679px;top:869px;width:488px;height:22px;background:#fff;box-shadow:inset 0 0 0 1px #8f8f8f;line-height:24px;padding-left:5px"><span class="n">G1 X0 F100</span><svg class="a" style="right:5px;top:8.0px" width="10" height="6" viewBox="0 0 10 6"><path d="M0.5 0.5L5 5L9.5 0.5" stroke="#444" stroke-width="1.1" fill="none"/></svg></div>
<div class="a fb t" style="left:1180px;top:870px;width:36px;height:24px;line-height:22px;border:2px solid #0a78d7"><span class="n">Send</span></div>
<div class="a big" style="left:1254px;top:102px;width:69px;height:44px;background:#0a80c8;line-height:44.5px;box-shadow:inset 1px 1px 0 #e4f6ff">Split</div>
<div class="a big" style="left:1254px;top:155px;width:69px;height:49px;background:#0a80c8;line-height:49.5px;box-shadow:inset 1px 1px 0 #e4f6ff">Viewer</div>
<div class="a big" style="left:1254px;top:209px;width:69px;height:44px;background:#ff8040;line-height:44.5px;box-shadow:inset 1px 1px 0 #fff0e4">Code</div>
<div class="a big" style="left:1254px;top:262px;width:69px;height:49px;background:#0a80c8;color:#1f425e;line-height:20px;font-size:19px;padding-top:6px;box-shadow:inset 1px 1px 0 #fff,inset -1px -1px 0 #6e6e6e,inset 0 0 0 3px #ececec">Probe<br>Extern</div>
<div class="a big" style="left:1254px;top:320px;width:69px;height:49px;background:#0a80c8;color:#1f425e;line-height:20px;font-size:19px;padding-top:6px;box-shadow:inset 1px 1px 0 #fff,inset -1px -1px 0 #6e6e6e,inset 0 0 0 3px #ececec">Probe<br><span style="margin-right:4px">Intern</span></div>
<div class="a t c" style="left:1255px;top:382px;width:65px;height:14px;"><span class="n">File:</span></div>
<div class="a rad" style="left:1278.9px;top:406.7px;width:10.2px;height:10.2px;"></div>
<div class="a t " style="left:1295.5px;top:405.5px;"><span class="n">1</span></div>
<div class="a rad on" style="left:1278.9px;top:426.2px;width:10.2px;height:10.2px;"></div>
<div class="a t " style="left:1295.5px;top:425px;"><span class="n">2</span></div>
<div class="a rad" style="left:1278.9px;top:445.2px;width:10.2px;height:10.2px;"></div>
<div class="a t " style="left:1295.5px;top:444px;"><span class="n">3</span></div>
<div class="a rad" style="left:1278.9px;top:464.2px;width:10.2px;height:10.2px;"></div>
<div class="a t " style="left:1295.5px;top:463px;"><span class="n">4</span></div>
<div class="a rad" style="left:1278.9px;top:483.7px;width:10.2px;height:10.2px;"></div>
<div class="a t " style="left:1295.5px;top:482.5px;"><span class="n">5</span></div>
<div class="a rad" style="left:1278.9px;top:502.7px;width:10.2px;height:10.2px;"></div>
<div class="a t " style="left:1295.5px;top:501.5px;"><span class="n">6</span></div>
<div class="a rad" style="left:1278.9px;top:522.2px;width:10.2px;height:10.2px;"></div>
<div class="a t " style="left:1295.5px;top:521px;"><span class="n">7</span></div>
<div class="a t c" style="left:1250px;top:550px;width:66px;height:14px;"><span class="n">Simulate</span></div>
<div class="a chk" style="left:1278px;top:570.6px;width:13px;height:13px;"><svg class="a" style="left:2px;top:2px" width="9" height="9" viewBox="0 0 9 9"><path d="M1 4.2L3.5 6.8L8 1.5" stroke="#000" stroke-width="1.7" fill="none"/></svg></div>
<div class="a fb t" style="left:1266px;top:593px;width:40px;height:16px;line-height:16px"><span class="n">run</span></div>
<div class="a t c" style="left:1254px;top:639.5px;width:66px;height:14px;"><span class="n">Block</span></div>
<div class="a t c" style="left:1254px;top:656.5px;width:66px;height:14px;"><span class="n">Delete</span></div>
<div class="a chk" style="left:1278px;top:680.4px;width:13px;height:13px;"><svg class="a" style="left:2px;top:2px" width="9" height="9" viewBox="0 0 9 9"><path d="M1 4.2L3.5 6.8L8 1.5" stroke="#000" stroke-width="1.7" fill="none"/></svg></div>
<div class="a fb t" style="left:1266px;top:728px;width:34px;height:22px;line-height:23px"><span class="n">Help</span></div>
<div class="a " style="left:1340px;top:2px;width:783px;height:29px;background:#fff"></div>
<div class="a " style="left:1340px;top:31px;width:783px;height:1px;background:#8e8e8e"></div>
<div class="a " style="left:1340px;top:32px;width:783px;height:36px;background:#f0f0f0"></div>
<div class="a " style="left:1340px;top:68px;width:783px;height:836px;background:#003300"></div>
<div class="a " style="left:1340px;top:903.6px;width:783px;height:1.2px;background:#001c00"></div>
<div class="a " style="left:1340px;top:904.8px;width:783px;height:1.2px;background:#c9d6c9"></div>
<div class="a t " style="left:1369px;top:8.5px;color:#949494;font-size:12.5px;line-height:14px;letter-spacing:-0.62px">G Code Viewer</div>
<div class="a " style="left:2007px;top:15px;width:10px;height:1px;background:#7a7a7a"></div>
<div class="a " style="left:2052px;top:10px;width:10px;height:10px;border:1px solid #7a7a7a"></div>
<svg class="a" style="left:2097px;top:9px" width="12" height="12" viewBox="0 0 12 12"><path d="M1 1L11 11M11 1L1 11" stroke="#7a7a7a" stroke-width="1" fill="none"/></svg>
<svg class="a" style="left:1347px;top:6px" width="18" height="18" viewBox="0 0 18 18"><g font-family="Liberation Sans,sans-serif" font-weight="bold" font-size="7" fill="#1d8c8c"><text x="1" y="6.6">G</text><text x="3.3" y="11.8">M</text><text x="4.8" y="17">C</text></g><path d="M9.5 1.5L12 2.5L14.5 1.2L15 3L14 5C16.5 7 16.8 10 15 12.5L17 17H9.8L11 13C9 11 9 7.5 10.8 5Z" fill="#129a9a"/><circle cx="13" cy="8.3" r="1.3" fill="#7fd8d8"/><path d="M11.5 14.5L13.3 12.8L15 14.8" fill="none" stroke="#0b6a6a" stroke-width="1"/></svg>
<div class="a " style="left:1615px;top:36px;width:49px;height:28px;background:#c3ddf5;border:1px solid #9ccaf3"></div>
<div class="a " style="left:1664px;top:36px;width:49px;height:28px;background:#c3ddf5;border:1px solid #9ccaf3"></div>
<div class="a " style="left:1713px;top:36px;width:49px;height:28px;background:#c3ddf5;border:1px solid #9ccaf3"></div>
<div class="a " style="left:1770px;top:36px;width:49px;height:28px;background:#c3ddf5;border:1px solid #9ccaf3"></div>
<svg class="a" style="left:0;top:0" width="2123" height="70" viewBox="0 0 2123 70"><path d="M1351.3 45.8H1366.8V59.4H1351.3Z M1351.3 45.8L1360.3 41.3H1373.8999999999999L1366.8 45.8 M1373.8999999999999 41.3V53.4L1366.8 59.4" fill="none" stroke="#19e019" stroke-width="2" stroke-linejoin="round" /><text class="vt" x="1376" y="50.8" font-size="10.5">XY</text><path d="M1400.3 45.8H1415.8V59.4H1400.3Z M1400.3 45.8L1409.3 41.3H1422.8999999999999L1415.8 45.8 M1422.8999999999999 41.3V53.4L1415.8 59.4" fill="none" stroke="#19e019" stroke-width="2" stroke-linejoin="round" /><text class="vt" x="1425.3" y="52" font-size="10.5">YZ</text><path d="M1449.3 45.8H1464.8V59.4H1449.3Z M1449.3 45.8L1458.3 41.3H1471.8999999999999L1464.8 45.8 M1471.8999999999999 41.3V53.4L1464.8 59.4" fill="none" stroke="#19e019" stroke-width="2" stroke-linejoin="round" /><text class="vt" x="1474.7" y="52" font-size="10.5">XZ</text><path d="M1523.5 45.5A8 8 0 1 0 1524 53.5" fill="none" stroke="#19e019" stroke-width="2.2"/><polygon points="1521,48.6 1527.2,48.6 1526.8,42.6" fill="#19e019"/><text class="vt" x="1528.7" y="58.8" font-size="10">XY</text><path d="M1562 39.8L1576.3 52.5M1575 39.5L1562.5 52" stroke="#e01414" stroke-width="2.6" fill="none"/><text class="vt" x="1567.5" y="60" font-size="10" textLength="34" lengthAdjust="spacingAndGlyphs">CLEAR</text><path d="M1637.9 52.6V40M1634.8 43L1637.9 39.5L1641 43M1637.9 52.6H1655.5M1652.5 49.5L1656 52.6L1652.5 55.7M1637.9 52.6L1631 59.5M1631 55.5V59.7H1635.2" fill="none" stroke="#19e019" stroke-width="1.8"/><text class="vt" x="1627.6" y="47.4" font-size="11">Y</text><text class="vt" x="1653.5" y="50" font-size="10.5">X</text><text class="vt" x="1621.6" y="60.6" font-size="12">Z</text><path d="M1669.5 47H1686.5 M1685.5 46V60 M1686.5 59H1669.5 M1670.5 60V46 M1670.5 47L1678.5 41.7 M1677.5 41.7H1694.3 M1693.3 41.7L1685.5 47 M1693.3 40.7V53.5 M1693.3 53L1685.5 59" fill="none" stroke="#19e019" stroke-width="2" stroke-dasharray="1.7 1.35"/><text class="vt" x="1694.6" y="48.2" font-size="9.5">B</text><text class="vt" x="1699.5" y="53.6" font-size="8">O</text><text class="vt" x="1703.5" y="61" font-size="9">X</text><polygon points="1719.2,40.2 1727.7,40.2 1727.7,55 1723.5,59 1719.2,55" fill="#10f010"/><text class="vt" x="1730" y="47.8" font-size="9.5" textLength="27.5" lengthAdjust="spacingAndGlyphs">TOOL</text><path d="M1774.7 45H1789.4V57.5H1774.7Z M1774.7 45L1784.0 39.8H1797.0L1789.4 45 M1797.0 39.8V52L1789.4 57.5" fill="none" stroke="#19e019" stroke-width="2" stroke-linejoin="round"/><text class="vt" x="1800" y="48.2" font-size="8.5" textLength="13" lengthAdjust="spacingAndGlyphs">OR</text><text class="vt" x="1797.3" y="60" font-size="8.5" textLength="17.5" lengthAdjust="spacingAndGlyphs">THO</text><text class="vt" x="1832" y="48" font-size="11" textLength="37" lengthAdjust="spacingAndGlyphs">Viewer</text><text class="vt" x="1834" y="58" font-size="11" textLength="32" lengthAdjust="spacingAndGlyphs">Setup</text></svg>
<svg class="a" style="left:0;top:0" width="2123" height="906" viewBox="0 0 2123 906"><path d="M1497.6 543.9L1792.5 606.4 M1792.5 606.4L1792.5 814.5 M1792.5 814.5L1497.6 751.9 M1497.6 751.9L1497.6 543.9 M1497.6 543.9L1831.5 263.2 M1831.5 263.2L1831.5 471.3 M1497.6 751.9L1831.5 471.3 M1792.5 606.4L2123.0 328.6 M1792.5 814.5L2123.0 536.7 M1831.5 263.2L2123.0 325.0 M1831.5 471.3L2123.0 533.1" stroke="#8cb090" stroke-width="1" fill="none"/><g transform="rotate(11.2 1644 675.2)"><rect x="1618.3" y="669.4" width="51.4" height="11.6" rx="4.5" fill="#8a8a8a"/><rect x="1620" y="670.6" width="48" height="4" rx="2" fill="#959395"/></g><path d="M1664.5 611.5L1685.9 592.9" stroke="#b4ac3c" stroke-width="2"/><circle cx="1685.9" cy="592.9" r="4.6" fill="#c9c040"/><circle cx="1685.9" cy="592.9" r="1.5" fill="#8a8420"/><path d="M1664.5 612V569" stroke="#f0e838" stroke-width="3"/><polygon points="1664.5,555.5 1669.6,569.5 1659.4,569.5" fill="#f0e838"/><path d="M1663.5 611.2L1706 619.2" stroke="#f0e838" stroke-width="2.6"/><polygon points="1718.2,622 1705,624 1706.4,614.5" fill="#f0e838"/><text x="1653.5" y="577.5" font-size="11" font-weight="bold" font-family="Liberation Sans,sans-serif" fill="#f0e838">Y</text><text x="1685" y="584" font-size="12" font-weight="bold" font-style="italic" font-family="Liberation Sans,sans-serif" fill="#f0e838">x</text><text x="1694" y="614.5" font-size="12" font-weight="bold" font-style="italic" font-family="Liberation Sans,sans-serif" fill="#f0e838">Z</text></svg>
</body></html>
